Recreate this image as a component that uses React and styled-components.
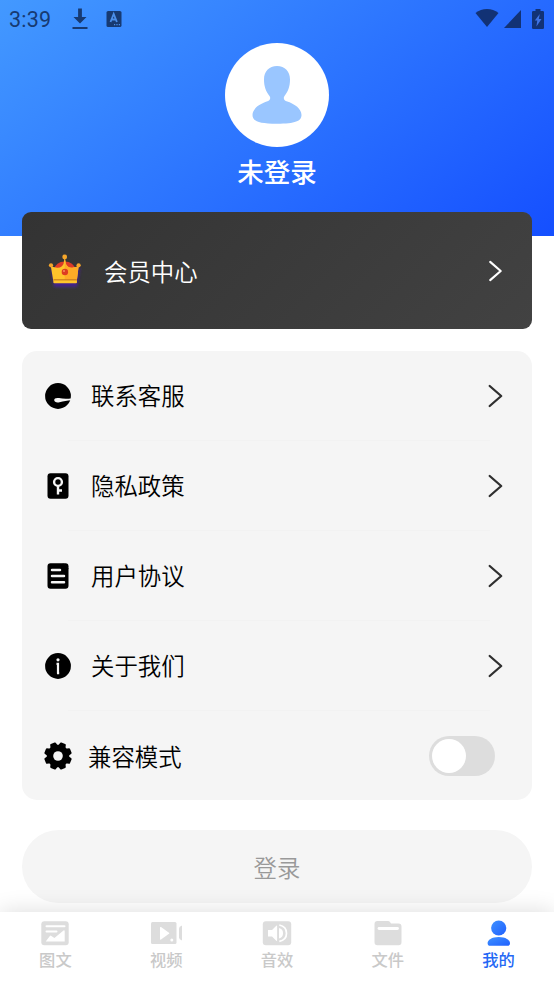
import { useState } from "react";
import styled, { createGlobalStyle } from "styled-components";

const GlobalStyle = createGlobalStyle`
  * {
    box-sizing: border-box;
  }

  body {
    margin: 0;
    background: #fff;
    font-family: "Noto Sans CJK SC", sans-serif;
  }

  svg {
    display: block;
    flex: none;
  }
`;

const Screen = styled.div`
  display: flex;
  flex-direction: column;
  width: 554px;
  height: 984px;
  overflow: hidden;
  background: #fff;
`;

const Header = styled.header`
  flex: none;
  height: 236px;
  background: linear-gradient(143deg, #4399ff 0%, #154fff 100%);
`;

const StatusBar = styled.div`
  display: flex;
  align-items: center;
  height: 38px;
  padding: 0 10px 0 9px;
  color: #173a72;
`;

const Clock = styled.span`
  width: 63px;
  padding-top: 2px;
  font-family: Roboto, sans-serif;
  font-size: 21.5px;
  font-weight: 450;
  line-height: 36px;
  letter-spacing: 0.2px;
`;

const StatusIcons = styled.div`
  display: flex;
  align-items: center;
  gap: ${props => props.gap};
  margin-left: ${props => props.end ? "auto" : "0"};
  color: ${props => props.end ? "#123275" : "inherit"};
`;

const Profile = styled.div`
  display: flex;
  flex-direction: column;
  align-items: center;
  padding-top: 5px;
`;

const Avatar = styled.div`
  display: flex;
  align-items: center;
  justify-content: center;
  width: 104px;
  height: 104px;
  border-radius: 50%;
  background: #fff;
`;

const UserName = styled.div`
  margin-top: 5px;
  color: #fff;
  font-size: 26.5px;
  font-weight: 500;
  line-height: 38px;
`;

const Content = styled.main`
  flex: none;
  height: 676px;
  padding: 0 22px;
`;

const MemberCard = styled.div`
  position: relative;
  display: flex;
  align-items: center;
  height: 117px;
  margin-top: -24px;
  padding: 0 29px 0 24px;
  border-radius: 9px;
  background: linear-gradient(135deg, #333 0%, #424242 100%);
  color: #fff;
`;

const MemberLabel = styled.span`
  flex: 1;
  margin-left: 20px;
  font-size: 23.4px;
  font-weight: 350;
  line-height: 34px;
`;

const Menu = styled.div`
  margin-top: 22px;
  border-radius: 15px;
  background: #f5f5f5;
`;

const MenuItem = styled.div`
  position: relative;
  display: flex;
  align-items: center;
  height: ${props => props.toggle ? "89px" : "90px"};
  padding: 0 ${props => props.toggle ? "37px" : "29px"} 0 22px;
  color: #2f2f2f;

  &:not(:last-child)::after {
    content: "";
    position: absolute;
    right: 42px;
    bottom: 0;
    left: 46px;
    height: 1px;
    background: #f2f2f2;
  }
`;

const MenuLabel = styled.span`
  flex: 1;
  margin-left: ${props => props.tight ? "16px" : "19px"};
  padding-bottom: ${props => props.tight ? "0" : "2px"};
  color: #000;
  font-size: 23.4px;
  font-weight: 350;
  line-height: 34px;
`;

const Toggle = styled.button`
  display: flex;
  justify-content: ${props => props.on ? "flex-end" : "flex-start"};
  width: 66px;
  height: 40px;
  padding: 3px;
  border: 0;
  border-radius: 20px;
  background: ${props => props.on ? "#2468ff" : "#ddd"};
`;

const Knob = styled.span`
  width: 34px;
  height: 34px;
  border-radius: 50%;
  background: #fff;
`;

const LoginButton = styled.button`
  display: block;
  width: 100%;
  height: 73px;
  margin-top: 30px;
  padding: 0;
  border: 0;
  border-radius: 37px;
  background: #f5f5f5;
  color: #999;
  font-family: inherit;
  font-size: 23.4px;
  font-weight: 350;
`;

const TabBar = styled.nav`
  position: relative;
  display: flex;
  flex: none;
  height: 72px;
  background: #fff;
  box-shadow: 0 0 22px rgba(0, 0, 0, 0.14);
`;

const Tab = styled.div`
  display: flex;
  flex: 1;
  flex-direction: column;
  align-items: center;
  padding-top: 7px;
  color: ${props => props.active ? "#2468f5" : "#c9c9c9"};
`;

const TabLabel = styled.span`
  font-size: 16.3px;
  font-weight: 500;
  line-height: 24px;
`;

const ChevronIcon = ({ size = 24 }) => (
  <svg width="15" height={size} viewBox="0 0 15 24" fill="none" stroke="currentColor" strokeWidth="2.3" strokeLinecap="round" strokeLinejoin="round">
    <path d="M1.700 2 13.200 12 1.700 22" />
  </svg>
);

const DownloadIcon = () => (
  <svg width="16" height="22" viewBox="0 0 16 22" fill="currentColor">
    <path d="M6.100 .5h3.800v8.500h4.600L8 15.500 1.500 9h4.600zM.5 19h15v2H.5z" />
  </svg>
);

const KeyboardIcon = () => (
  <svg width="16" height="18" viewBox="0 0 16 18">
    <rect x=".5" y="1" width="15" height="16" rx="1.6" fill="currentColor" />
    <path d="m4.500 12 3.200-8 3.200 8M5.600 9.500h4.200" fill="none" stroke="#4b8fea" strokeWidth="1.8" />
    <path d="M8 14.600h1.200M10.400 14.600h1.200M12.800 14.600h1.200" stroke="#4b8fea" strokeWidth="1.200" />
  </svg>
);

const WifiIcon = () => (
  <svg width="24" height="20" viewBox="0 0 24 20" fill="currentColor">
    <path d="M12 18 .5 4Q5.600 0 12 0t11.500 4z" />
  </svg>
);

const SignalIcon = () => (
  <svg width="17" height="18" viewBox="0 0 17 18" fill="currentColor">
    <path d="M17 0v18H0z" />
  </svg>
);

const BatteryIcon = () => (
  <svg width="12" height="20" viewBox="0 0 12 20">
    <path d="M3.500 0h5v2h2.300q1.200 0 1.200 1.200v15.600q0 1.200-1.200 1.200H1.200Q0 20 0 18.800V3.200Q0 2 1.200 2h2.300z" fill="currentColor" />
    <path d="M7.800 5 2.800 11.500h2.500L4.400 17.500 9.500 10H6.800z" fill="#3f74e6" />
  </svg>
);

const PersonIcon = () => (
  <svg width="50" height="58" viewBox="0 0 50 58" fill="#9ac6ff">
    <path d="M25 0C33 0 38 5.500 38 13.500c0 7-2 12-5.500 16.500-1.500 2-.5 4.500 2 5.300C43 38 49.500 43 49.500 49c0 6-6 8.700-24.500 8.700S.5 55 .5 49c0-6 6.500-11 15-13.700 2.500-.8 3.500-3.300 2-5.300C14 25.500 12 20.500 12 13.500 12 5.500 17 0 25 0z" />
  </svg>
);

const CrownGraphic = styled.svg`
  overflow: visible;
`;

const CrownIcon = () => (
  <CrownGraphic width="38" height="38" viewBox="0 0 38 38">
    <defs>
      <filter id="crownGlow" x="-30%" y="-30%" width="160%" height="160%">
        <feGaussianBlur stdDeviation="1.500" />
      </filter>
    </defs>
    <path d="m5 16 3 19h23l3-19z" fill="#43208d" filter="url(#crownGlow)" />
    <path d="M7.500 18Q10 9.500 18.700 9.500T30 18v5H7.500z" fill="#dd3a28" />
    <path d="M4.700 13.500Q7 15.500 10 15.500 15.500 16.500 17.500 12L18.700 5l1.200 7q2 4.500 7.500 3.500 3 0 5.300-2L30.800 29H7.300z" fill="#ffc32b" />
    <path d="m18.700 5 1.200 7q2 4.500 7.500 3.500 3 0 5.300-2L30.800 29H18.700z" fill="#ffab27" />
    <path d="M7.500 27.200h23.300v1.600H7.500z" fill="#c97b20" />
    <rect x="7.300" y="28.500" width="23.700" height="2.700" rx="1" fill="#ffc62c" />
    <circle cx="18.700" cy="5" r="2.400" fill="#f6a62a" />
    <circle cx="5" cy="13.300" r="2.100" fill="#f6a62a" />
    <circle cx="32.600" cy="13.300" r="2.100" fill="#f6a62a" />
    <circle cx="18.900" cy="20" r="3.200" fill="#dd3c22" />
    <circle cx="18" cy="19" r="1" fill="#f58b62" />
  </CrownGraphic>
);

const ServiceIcon = () => (
  <svg width="28" height="28" viewBox="0 0 28 28">
    <circle cx="14" cy="14" r="12.900" />
    <path d="M28 16.300Q21 17.500 15 16.100c-3-.5-4.800.3-4.800 2 0 1.800 2.300 2.700 5.300 2.100 4.500-.9 7-1.700 12.500-1.900z" fill="#f5f5f5" />
  </svg>
);

const PrivacyIcon = () => (
  <svg width="28" height="28" viewBox="0 0 28 28">
    <rect x="3.500" y="1.300" width="21" height="25.400" rx="3" />
    <g fill="none" stroke="#f5f5f5" strokeWidth="2.400">
      <circle cx="14" cy="10" r="3.900" />
      <path d="M14 14v8.500M14 18.500h4" />
    </g>
  </svg>
);

const AgreementIcon = () => (
  <svg width="28" height="28" viewBox="0 0 28 28">
    <path d="M6.500 1.300H19L24.500 6.500v17.200q0 3-3 3h-15q-3 0-3-3V4.300q0-3 3-3z" />
    <path d="M18.500 1.300h3q3 0 3 3v3z" />
    <path d="M8 8h8M8 14h12M8 20.300h12" stroke="#f5f5f5" strokeWidth="2.500" strokeLinecap="round" />
  </svg>
);

const AboutIcon = () => (
  <svg width="28" height="28" viewBox="0 0 28 28">
    <circle cx="14" cy="14" r="12.900" />
    <circle cx="14" cy="7.800" r="1.600" fill="#f5f5f5" />
    <path d="M12.500 11.800H14V21.500M13 21.200h2.200" fill="none" stroke="#f5f5f5" strokeWidth="2.200" />
  </svg>
);

const GearIcon = () => (
  <svg width="28" height="28" viewBox="0 0 28 28">
    <circle cx="14" cy="14" r="11.200" />
    {[22.5, 67.5, 112.5, 157.5, 202.5, 247.5, 292.5, 337.5].map(angle => (
      <path key={angle} d="M10 4.500 11 .8q.3-.6 1-.6h4q.7 0 1 .6l1 3.700z" transform={`rotate(${angle} 14 14)`} />
    ))}
    <circle cx="14" cy="14" r="4.800" fill="#f5f5f5" />
  </svg>
);

const ImageTextIcon = () => (
  <svg width="30" height="28" viewBox="0 0 30 28">
    <rect x="1.300" y="2.200" width="27.400" height="24" rx="3" fill="#ddd" />
    <path d="M6.500 7.200h18M6.500 12.500h10" stroke="#fff" strokeWidth="2" strokeLinecap="round" />
    <path d="m5.700 22.500 4.200-5.600q.6-.8 1.500 0l3 2.200 8.500-7.200q1.800-1.300 1.800.5v10.100z" fill="#fff" />
  </svg>
);

const VideoIcon = () => (
  <svg width="32" height="28" viewBox="0 0 32 28">
    <rect x="1" y="3" width="25.500" height="22" rx="1.500" fill="#ddd" />
    <path d="M10 8.500V20q0 1 1 .4l8-5.600q.7-.6 0-1.100l-8-5.600q-1-.6-1 .4z" fill="#fff" />
    <circle cx="21.800" cy="21" r="1.500" fill="#fff" />
    <path d="M32 6.500v15q-3-1-3-3v-9q0-2 3-3z" fill="#ddd" />
  </svg>
);

const SoundIcon = () => (
  <svg width="30" height="28" viewBox="0 0 30 28">
    <rect x=".8" y="2.200" width="28.400" height="24" rx="3" fill="#ddd" />
    <path d="M6 11h4l4.300-4.200q.8-.6.8.5v14q0 1-.8.4L10 17.500H6z" fill="#fff" />
    <path d="M17 9q4 1 4 5.200t-4 5.200z" fill="#fff" />
    <path d="M17.300 6q7.200 1.500 7.200 8.200t-7.200 8.200" fill="none" stroke="#fff" strokeWidth="1.700" />
  </svg>
);

const FileIcon = () => (
  <svg width="30" height="28" viewBox="0 0 30 28">
    <path d="M4.500 2H15q1.300 0 2 1l1 1.500h7.500q3 0 3 3v15.700q0 3-3 3h-21q-3 0-3-3V5q0-3 3-3z" fill="#ddd" />
    <path d="M6 9.500h18.500" stroke="#fff" strokeWidth="2.800" strokeLinecap="round" />
  </svg>
);

const MineIcon = () => (
  <svg width="30" height="28" viewBox="0 0 30 28">
    <defs>
      <linearGradient id="mine" x1="0" y1="0" x2="1" y2="1">
        <stop offset="0" stopColor="#3f92ff" />
        <stop offset="1" stopColor="#2060ff" />
      </linearGradient>
    </defs>
    <circle cx="14.700" cy="9" r="7.600" fill="url(#mine)" />
    <path d="M14.700 18C21.700 18 26 21 26 24.200c0 1.700-1 2.600-2.600 2.600H6.200c-1.600 0-2.600-.9-2.600-2.600 0-3.200 4.200-6.200 11.100-6.200z" fill="url(#mine)" />
  </svg>
);

const menuItems = [
  { name: "联系客服", icon: ServiceIcon },
  { name: "隐私政策", icon: PrivacyIcon },
  { name: "用户协议", icon: AgreementIcon },
  { name: "关于我们", icon: AboutIcon },
];

const tabs = [
  { name: "图文", icon: ImageTextIcon },
  { name: "视频", icon: VideoIcon },
  { name: "音效", icon: SoundIcon },
  { name: "文件", icon: FileIcon },
  { name: "我的", icon: MineIcon, active: true },
];

const App = () => {
  const [compatible, setCompatible] = useState(false);

  return (
    <>
      <GlobalStyle />
      <Screen>
        <Header>
          <StatusBar>
            <Clock>3:39</Clock>
            <StatusIcons gap="18px">
              <DownloadIcon />
              <KeyboardIcon />
            </StatusIcons>
            <StatusIcons gap="5.5px" end>
              <WifiIcon />
              <SignalIcon />
              <span />
              <BatteryIcon />
            </StatusIcons>
          </StatusBar>
          <Profile>
            <Avatar><PersonIcon /></Avatar>
            <UserName>未登录</UserName>
          </Profile>
        </Header>
        <Content>
          <MemberCard>
            <CrownIcon />
            <MemberLabel>会员中心</MemberLabel>
            <ChevronIcon size={22} />
          </MemberCard>
          <Menu>
            {menuItems.map(({ name, icon: Icon }) => (
              <MenuItem key={name}>
                <Icon />
                <MenuLabel>{name}</MenuLabel>
                <ChevronIcon />
              </MenuItem>
            ))}
            <MenuItem toggle="true">
              <GearIcon />
              <MenuLabel tight="true">兼容模式</MenuLabel>
              <Toggle onClick={() => setCompatible(!compatible)} on={compatible}>
                <Knob />
              </Toggle>
            </MenuItem>
          </Menu>
          <LoginButton>登录</LoginButton>
        </Content>
        <TabBar>
          {tabs.map(({ name, icon: Icon, active }) => (
            <Tab key={name} active={active}>
              <Icon />
              <TabLabel>{name}</TabLabel>
            </Tab>
          ))}
        </TabBar>
      </Screen>
    </>
  );
};

export default App;
